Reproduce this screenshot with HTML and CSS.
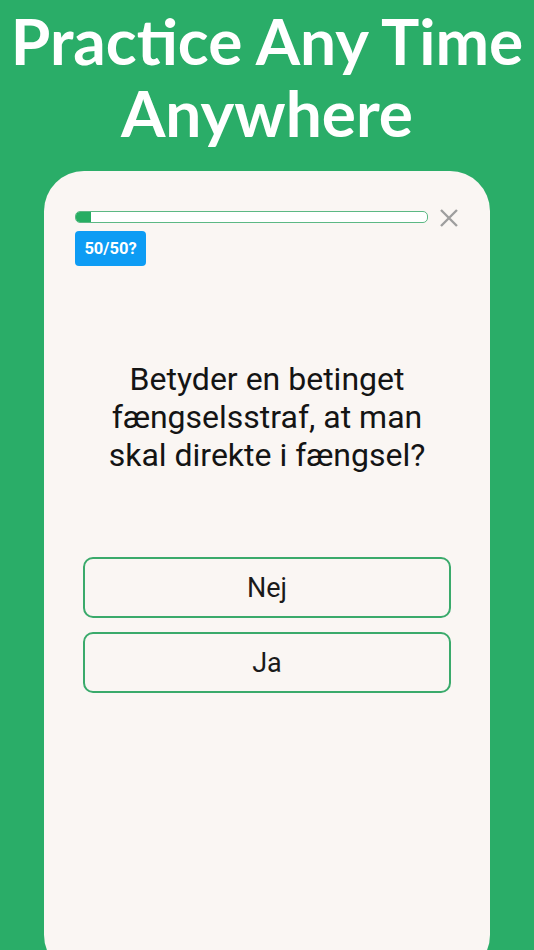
FILE: index.html
```html
<!DOCTYPE html>
<html>
<head>
<meta charset="utf-8">
<link rel="stylesheet" href="styles.css">
</head>
<body>
<div class="screen">
  <h1 class="headline">Practice Any Time<br>Anywhere</h1>
  <div class="card">
    <div class="topbar">
      <div class="progress"><div class="fill"></div></div>
      <svg class="close" width="20" height="20" viewBox="0 0 20 20"><path d="M2 2 L18 18 M18 2 L2 18" stroke="#9e9e9e" stroke-width="2.4" stroke-linecap="butt" fill="none"/></svg>
    </div>
    <div class="badge">50/50?</div>
    <p class="question">Betyder en betinget fængselsstraf, at man skal direkte i fængsel?</p>
    <div class="answers">
      <div class="answer">Nej</div>
      <div class="answer">Ja</div>
    </div>
  </div>
</div>
</body>
</html>
```
FILE: styles.css
```css
html, body {
  margin: 0;
  padding: 0;
}
body {
  width: 534px;
  height: 950px;
  overflow: hidden;
  background: #2aad68;
}
.screen {
  display: flex;
  flex-direction: column;
  align-items: center;
}
.headline {
  margin: 5px 0 0 0;
  font-family: Lato, "Open Sans", sans-serif;
  font-weight: 700;
  font-size: 64px;
  line-height: 72px;
  color: #ffffff;
  text-align: center;
  letter-spacing: 0;
  white-space: nowrap;
}
.card {
  margin-top: 22px;
  width: 446px;
  height: 804px;
  background: #faf6f3;
  border-radius: 40px;
  box-sizing: border-box;
  padding: 39px 31px 0 31px;
  display: flex;
  flex-direction: column;
}
.topbar {
  display: flex;
  align-items: center;
  gap: 11px;
  height: 14px;
}
.progress {
  width: 354px;
  height: 12px;
  box-sizing: border-box;
  border: 1.5px solid #5cb884;
  border-radius: 5px;
  background: #ffffff;
  overflow: hidden;
}
.fill {
  width: 15px;
  height: 100%;
  background: #27ad62;
}
.close {
  display: block;
  margin-top: 1px;
}
.badge {
  margin-top: 7px;
  align-self: flex-start;
  width: 71px;
  height: 35px;
  background: #0d9cf4;
  border-radius: 4px;
  color: #ffffff;
  font-family: Roboto, sans-serif;
  font-weight: 700;
  font-size: 16.5px;
  display: flex;
  align-items: center;
  justify-content: center;
}
.question {
  margin: 94px 0 0 0;
  font-family: Roboto, sans-serif;
  font-size: 32px;
  line-height: 38px;
  color: #141414;
  text-align: center;
  padding: 0 16px;
}
.answers {
  margin-top: 83px;
  display: flex;
  flex-direction: column;
  gap: 14px;
  padding: 0 8px;
}
.answer {
  height: 61px;
  box-sizing: border-box;
  border: 2px solid #3aaa6b;
  border-radius: 10px;
  display: flex;
  align-items: center;
  justify-content: center;
  font-family: Roboto, sans-serif;
  font-size: 27px;
  color: #1a1a1a;
}
```
